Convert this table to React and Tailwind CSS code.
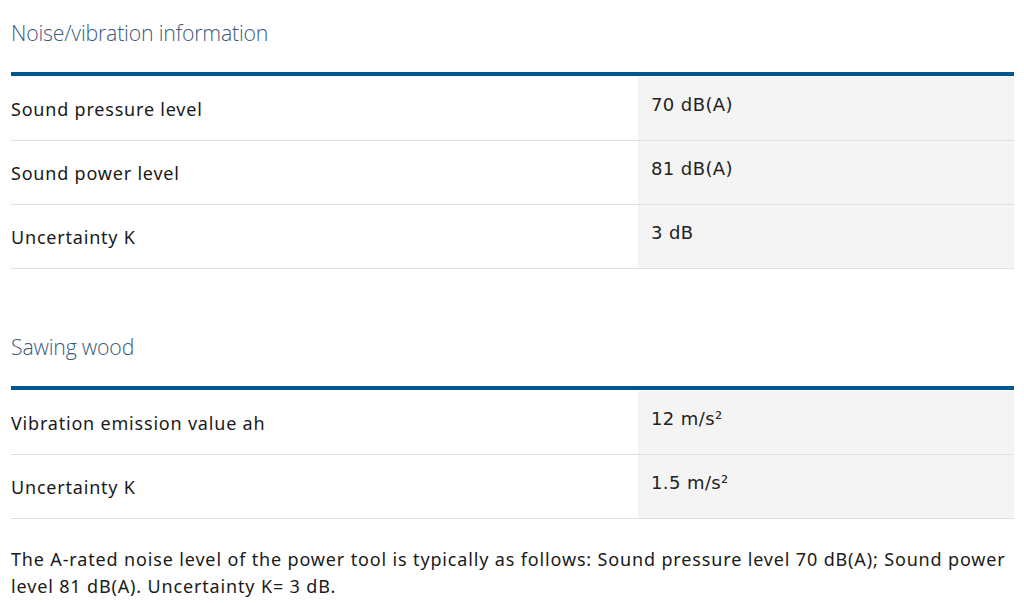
import React from 'react'

const sections = [
  {
    title: 'Noise/vibration information',
    rows: [
      { label: 'Sound pressure level', value: '70 dB(A)' },
      { label: 'Sound power level', value: '81 dB(A)' },
      { label: 'Uncertainty K', value: '3 dB' }
    ]
  },
  {
    title: 'Sawing wood',
    rows: [
      { label: 'Vibration emission value ah', value: '12 m/s²' },
      { label: 'Uncertainty K', value: '1.5 m/s²' }
    ]
  }
]

const SpecTable = ({ title, rows, className }) => (
  <div className={className}>
    <h3 className="text-[21.3px] font-light text-[#3b5a7d] leading-[28px] tracking-[-0.2px] [font-family:'Open_Sans',sans-serif]">
      {title}
    </h3>
    <div className="mt-[25px] border-t-[4px] border-[#005691] pt-[1px]">
      {rows.map((row, index) => (
        <div key={index} className="flex h-[64px] border-b border-[#e0e0e0]">
          <div className="w-[627px] flex items-center pt-[2px] text-[18px] text-[#1a1a1a] tracking-[0.8px] [font-family:'Noto_Sans',sans-serif]">
            {row.label}
          </div>
          <div className="flex-1 bg-[#f4f4f4] pl-[13px] pt-[14px] text-[18px] text-[#222] tracking-[0.4px] [font-family:'DejaVu_Sans',sans-serif]">
            {row.value}
          </div>
        </div>
      ))}
    </div>
  </div>
)

const App = () => {
  return (
    <div className="min-h-screen bg-white pl-[11px] pr-[10px] pt-[19px]">
      <SpecTable title={sections[0].title} rows={sections[0].rows} />
      <SpecTable title={sections[1].title} rows={sections[1].rows} className="mt-[64px]" />
      <p className="mt-[27px] text-[18px] leading-[27px] text-[#1a1a1a] tracking-[0.85px] [font-family:'Noto_Sans',sans-serif]">
        The A-rated noise level of the power tool is typically as follows: Sound pressure level 70 dB(A); Sound power level 81 dB(A). Uncertainty K= 3 dB.
      </p>
    </div>
  )
}

export default App
